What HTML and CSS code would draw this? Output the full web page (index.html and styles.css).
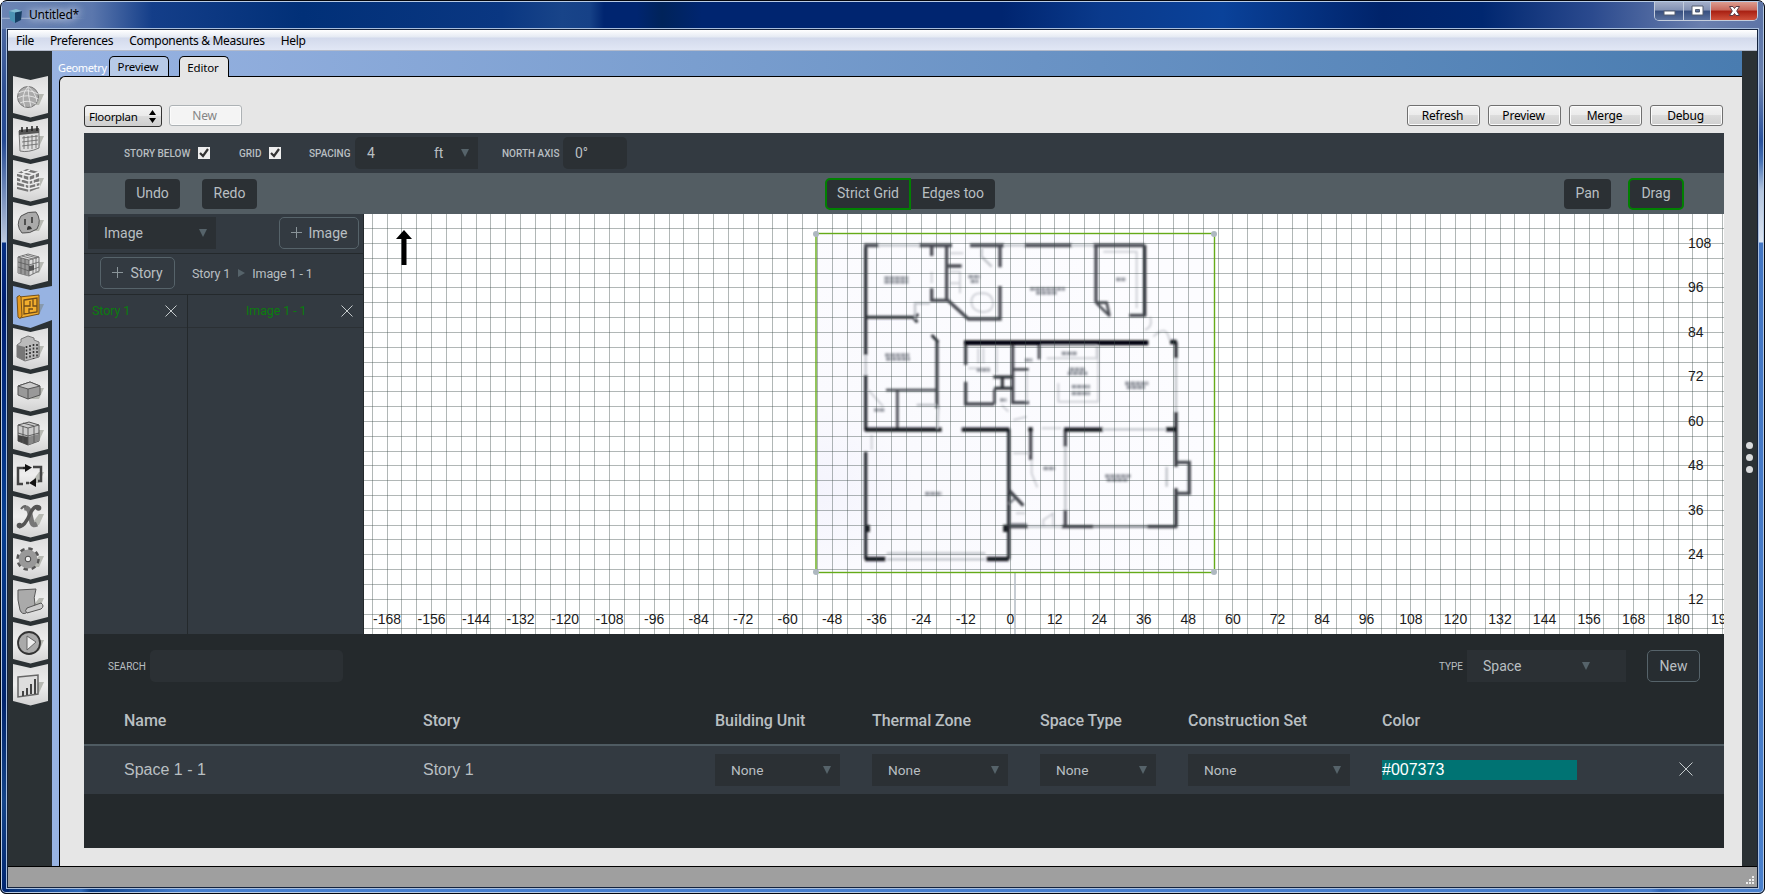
FILE: index.html
```html
<!DOCTYPE html>
<html lang="en">
<head>
<meta charset="utf-8">
<title>Untitled*</title>
<link rel="stylesheet" href="styles.css">
</head>
<body>
<div class="window">
  <header class="titlebar">
    <svg class="app-icon" width="14" height="14" viewBox="0 0 14 14"><path d="M0 2L6 3V14L1 11Z" fill="#4c93b4"/><path d="M6 3L13 2L12 11L6 14Z" fill="#173f63"/><path d="M0 2L7 0L13 2L6 3.500Z" fill="#83bdd2"/></svg>
    <span class="title">Untitled*</span>
    <div class="controls">
      <span class="ctl"><svg width="28" height="18"><rect x="9" y="9" width="11" height="4" fill="#fff" stroke="#555e70"/></svg></span>
      <span class="ctl"><svg width="26" height="18"><path d="M8 4H19V13H8ZM11.500 7.500V10H15.500V7.500Z" fill="#fff" fill-rule="evenodd" stroke="#555e70"/></svg></span>
      <span class="ctl close"><svg width="46" height="18"><path d="M18.500 4.500H22L23.500 6.500L25 4.500H28.500L25.700 9L28.500 13.500H25L23.500 11.500L22 13.500H18.500L21.300 9Z" fill="#fff" stroke="#5b3b45"/></svg></span>
    </div>
  </header>
  <div class="client">
    <nav class="menu"><span>File</span><span>Preferences</span><span>Components &amp; Measures</span><span>Help</span></nav>
    <div class="main">
      <aside class="rail" id="rail"></aside>
      <div class="stage">
        <div class="tabs"><span class="section">Geometry</span><span class="tab">Preview</span><span class="tab active">Editor</span></div>
        <div class="page">
          <div class="actions">
            <span class="combo">Floorplan<svg width="7" height="13"><path d="M0 5L3.500 0L7 5ZM0 8L3.500 13L7 8Z"/></svg></span>
            <span class="btn disabled">New</span>
            <span class="spring"></span>
            <span class="btn">Refresh</span><span class="btn">Preview</span><span class="btn">Merge</span><span class="btn">Debug</span>
          </div>
          <div class="editor">
            <div class="settings">
              <label class="story-below">STORY BELOW <i class="check"><svg width="12" height="12"><path d="M2 6L5 9L10 2" fill="none" stroke="#333" stroke-width="2.200"/></svg></i></label>
              <label class="grid-opt">GRID <i class="check"><svg width="12" height="12"><path d="M2 6L5 9L10 2" fill="none" stroke="#333" stroke-width="2.200"/></svg></i></label>
              <label class="spacing">SPACING</label><span class="field num">4</span><span class="field unit">ft<b class="caret"></b></span>
              <label class="north">NORTH AXIS</label><span class="field axis">0°</span>
            </div>
            <div class="tools">
              <span class="tool undo">Undo</span><span class="tool redo">Redo</span>
              <span class="tool strict on">Strict Grid</span><span class="tool edges">Edges too</span>
              <span class="tool pan">Pan</span><span class="tool drag on">Drag</span>
            </div>
            <div class="work">
              <div class="side">
                <div class="side-top"><span class="field kind">Image<b class="caret"></b></span><span class="outline add-image"><svg width="11" height="11"><path d="M5.500 0V11M0 5.500H11"/></svg>Image</span></div>
                <div class="crumbs"><span class="outline add-story"><svg width="11" height="11"><path d="M5.500 0V11M0 5.500H11"/></svg>Story</span><span>Story 1</span><b class="arrow"></b><span>Image 1 - 1</span></div>
                <div class="lists">
                  <div class="list stories"><div class="item"><span>Story 1</span><svg class="x" width="12" height="12"><path d="M.5.500L11.500 11.500M11.500.500L.5 11.500"/></svg></div></div>
                  <div class="list images"><div class="item"><span>Image 1 - 1</span><svg class="x" width="12" height="12"><path d="M.5.500L11.500 11.500M11.500.500L.5 11.500"/></svg></div></div>
                </div>
              </div>
              <svg class="canvas" width="1360" height="420" viewBox="364 214 1360 420">
                <defs>
                  <filter id="soft" x="-5%" y="-5%" width="110%" height="110%"><feGaussianBlur stdDeviation="2.600"/></filter>
                  <filter id="haze" x="-5%" y="-5%" width="110%" height="110%"><feGaussianBlur stdDeviation="3.200"/></filter>
                  <radialGradient id="tint" cx="0" cy=".75" r="1"><stop offset="0" stop-color="#f4f4fd"/><stop offset=".25" stop-color="#fafafe"/><stop offset="1" stop-color="#fcfcff"/></radialGradient>
                </defs>
                <rect x="816" y="234" width="398" height="338" fill="url(#tint)"/>
                <g transform="translate(800 220) scale(.33333)">
                  <g filter="url(#soft)" fill="none" stroke="#2b2d34">
                    <path stroke-width="10" d="M197 75V405M197 465V632M197 695V1018M626 628V1018M1034 75V290M1128 365V415M1128 575V740M1128 805V920"/>
                    <path stroke-width="11" stroke="#4b4e56" d="M192 76H236M358 76H456M510 76H612M674 76H815M880 76H1034"/>
                    <path stroke-width="10" stroke="#484b53" d="M440 76V238L505 297H600V198M600 76V142M888 76V248M395 76V108M395 205V241H440M440 138H485M988 286H1034M411 365V565M497 368V435M497 485V552H583M638 370V548H687M796 628V680M796 870V920M692 628V720M1128 727H1168V820H1128"/>
                    <path stroke-width="8" stroke="#484b53" d="M258 510H410M292 510V628M583 508V552M640 448H686M717 375V418M888 248L930 289M888 248H920L928 285"/>
                    <path stroke-width="9" d="M197 292H345M340 293L355 283M340 292L352 307M395 345L415 367M580 471H638M583 505H638M607 471V505"/>
                    <path stroke-width="15" stroke="#050608" d="M492 368H1045"/>
                    <path stroke-width="13" stroke="#181a20" d="M195 629H425M485 629H628M792 629H908M1098 628H1130M1110 366H1130M685 628H698M195 1017H256M560 1017H626M203 915V936M616 914V936"/>
                    <path stroke-width="10" stroke="#3c3f47" d="M626 920H684M785 920H880M1042 920H1132M626 810L670 857"/>
                    <path stroke-width="7" stroke="#777b83" d="M880 920H1042M626 852L645 835M630 913L680 913"/>
                  </g>
                  <g filter="url(#haze)" fill="none" stroke="#c0c3c9" stroke-width="7">
                    <path d="M236 76H358M612 76H674M815 76H880M197 405V465M260 1000H556M260 1018H556M1128 415V575M796 680V870M908 628H1098M684 920H785M1100 740V800M350 555H410M415 555L412 628M345 300V250H390M545 85V110L575 140"/>
                    <path d="M910 95H1010V265M450 100H490M450 155H480V220M450 190H480M395 155V190M540 220Q575 215 580 250Q575 280 542 275Q510 270 515 238Q520 220 540 220M680 455V550M895 375V545H775V490M720 375H890V415H740M535 385V430M550 385V430M590 380V460M505 445H570M640 700H690M695 720V760L712 802M725 625H785M640 600L680 590M1035 330Q1060 320 1050 290M1060 350Q1100 310 1108 360M760 920V880L730 900V920M205 510L250 560M215 645V690M605 555L625 575M648 880H675" stroke-width="6" opacity=".75"/>
                    <path stroke="#9a9da5" stroke-width="11" stroke-dasharray="14 2" d="M253 174H325M253 186H325M255 405H328M258 417H330M690 207H795M708 219H770M505 170H540M512 184H535M948 178H976M808 448H855M803 460H862M975 490H1045M980 502H1035M815 500H870M815 520H870M785 400H830M375 821H425M730 745H765M915 768H992M920 780H985M222 570H255M530 450H570M600 540H620M675 420H697"/>
                  </g>
                </g>
                <g id="grid" stroke="#3b4a49" stroke-opacity=".4" shape-rendering="crispEdges"></g>
                <path d="M1015 573V634" stroke="#b4bdc4" stroke-width="1.500"/>
                <rect x="816" y="233.500" width="398.500" height="339" fill="none" stroke="#65ab18" stroke-width="1.400"/>
                <g fill="#aeb8c0"><circle cx="816" cy="234" r="3"/><circle cx="1214" cy="234" r="3"/><circle cx="816" cy="572" r="3"/><circle cx="1214" cy="572" r="3"/></g>
                <path d="M404 230L412 239H406.500V265H401.500V239H396Z"/>
                <g id="labels" font-family="'Liberation Sans',Arial,sans-serif" font-size="14" fill="#1c1c1c"></g>
              </svg>
            </div>
            <div class="browser">
              <div class="filter"><label>SEARCH</label><span class="field search"></span><span class="spring"></span><label>TYPE</label><span class="field type">Space<b class="caret"></b></span><span class="outline new">New</span></div>
              <div class="row head"><span>Name</span><span>Story</span><span>Building Unit</span><span>Thermal Zone</span><span>Space Type</span><span>Construction Set</span><span>Color</span><span></span></div>
              <div class="row data"><span>Space 1 - 1</span><span>Story 1</span>
                <span class="field none w125">None<b class="caret"></b></span><span class="field none w136">None<b class="caret"></b></span><span class="field none w116">None<b class="caret"></b></span><span class="field none w162">None<b class="caret"></b></span>
                <span class="color">#007373</span><span><svg class="x" width="14" height="14"><path d="M.5.500L13.500 13.500M13.500.500L.5 13.500"/></svg></span></div>
            </div>
          </div>
        </div>
      </div>
      <aside class="handle"><i></i><i></i><i></i></aside>
    </div>
    <footer class="status"><svg width="10" height="10"><path d="M7 1h2v2H7zM7 4h2v2H7zM7 7h2v2H7zM4 4h2v2H4zM4 7h2v2H4zM1 7h2v2H1z" fill="#eee"/></svg></footer>
  </div>
</div>
<script src="app.js"></script>
</body>
</html>
```
FILE: styles.css
```css
* { box-sizing: border-box; }
body { margin: 0; width: 1765px; height: 894px; overflow: hidden; background: #fff; font-family: "Noto Sans", sans-serif; }
.window { width: 1765px; height: 894px; padding: 1px 6px 5px; border: 1px solid #05070d; border-radius: 7px 7px 6px 6px; display: flex; flex-direction: column;
  background: linear-gradient(#5872a8 0, #2e4f92 90px, #254a93 140px, #b3c1d9 235px, #bccae0 241px, #073084 242px, #001f72 300px, #073f91 520px, #01246d 700px, #144489 800px, #00246f 100%) left / 8px 100% no-repeat,
  linear-gradient(#5872a8 0, #6c82ae 80px, #2a529d 140px, #4772b4 160px, #b4c6df 190px, #dbe4f1 241px, #4477c4 242px, #4a80cc 100%) right / 8px 100% no-repeat, linear-gradient(90deg, #032c70 0, #2e69b9 80px, #0a3d85 90px, #477fce 180px, #477dcb 1650px, #2e62b2 1660px, #4a80cc 1700px) bottom / 100% 8px no-repeat, #012570;
  box-shadow: inset 0 0 0 1px #b8cbe4; }
.titlebar { height: 27px; flex: none; margin: 0 -5px; padding-left: 7px; display: flex; align-items: center;
  background: radial-gradient(ellipse at 0 60%, #aabbd3 0, #91a5c8 50px, transparent 90px), linear-gradient(90deg, #6b84b3 0, #5b77ad 90px, #143e89 150px, #013078 300px, #0a3782 500px, #184489 560px, #164187 588px, #002570 602px, #002570 635px, #00235a 660px, #002570 700px, #002570 1000px, #0a3a8c 1100px, #0a429a 1220px, #00236a 1380px, #002770 1480px, #2b4a8e 1590px, #6a7fae 1700px, #5d74a6 1764px); }
.app-icon { margin-right: 6px; }
.title { font-size: 12px; letter-spacing: -.2px; padding-bottom: 2px; text-shadow: 0 0 8px #fff, 0 0 10px #dbe6f5; }
.controls { align-self: flex-start; margin-left: auto; margin-right: 5px; display: flex; border: 1px solid #c3cddd; border-top: 0; border-radius: 0 0 5px 5px; overflow: hidden; height: 19px; }
.ctl { border-right: 1px solid #c3cddd; height: 18px; background: linear-gradient(#a4afc9, #8291b3 45%, #374f7f 50%, #5a719e); }
.ctl.close { border: 0; background: linear-gradient(#dd9d90, #c8685b 45%, #a81f12 50%, #cf513b); }
.ctl svg { display: block; }
.client { flex: 1; min-height: 0; display: flex; flex-direction: column; border: 1px solid #14223c; outline: 1px solid #a7bddc; }
.menu { height: 21px; flex: none; padding: 0 8px; display: flex; gap: 16px; align-items: center; font-size: 12px; background: linear-gradient(#fff, #e5eaf3 7px, #d3daec 8px, #e1e7f5); border-bottom: 1px solid #b4bbcb; }
.menu span { white-space: nowrap; letter-spacing: -.32px; }
.main { flex: 1; min-height: 0; display: flex; }
.rail { width: 44px; flex: none; background: #2b3134; padding: 25px 0 0 5px; }
.rail svg { display: block; height: 42px; overflow: visible; }
.stage { flex: 1; min-width: 0; background: linear-gradient(90deg, #98b3e2, #497cb0); display: flex; flex-direction: column; }
.tabs { height: 25px; flex: none; display: flex; align-items: flex-end; padding-left: 6px; font-size: 11.500px; }
.section { color: #fff; width: 51px; padding-bottom: 1px; font-size: 11px; letter-spacing: -.35px; }
.tab { height: 20px; width: 60px; border: 1px solid #000; border-bottom: 0; border-radius: 5px 5px 0 0; background: #b7cae7; text-align: center; line-height: 20px; padding-right: 2px; letter-spacing: -.15px; }
.tab.active { width: 50px; height: 21px; margin: 0 0 -1px 10px; background: #e6e6e6; line-height: 22px; position: relative; }
.page { flex: 1; margin-left: 7px; border: 1px solid #000; border-right: 0; border-radius: 6px 0 0 0; border-bottom: 0; background: #e6e6e6; padding: 28px 18px 0 24px; }
.actions { display: flex; align-items: flex-start; height: 28px; gap: 8px; }
.spring { flex: 1; }
.btn, .combo { height: 21px; width: 73px; font-size: 12px; letter-spacing: -.2px; line-height: 20px; text-align: center; border: 1px solid #707070; border-radius: 3px; background: linear-gradient(#f3f3f3, #ebebeb 48%, #dcdcdc 50%, #cfcfcf); box-shadow: inset 0 0 0 1px #fbfbfb; padding-right: 2px; }
.btn:last-child { margin-right: 1px; }
.combo { width: 78px; height: 22px; padding: 1px 5px 0 4px; border-color: #333; display: flex; justify-content: space-between; align-items: center; margin-right: -1px; box-shadow: none; font-size: 11.500px; letter-spacing: -.3px; }
.disabled { color: #848484; background: #f4f4f4; border-color: #adb2b5; }
.editor { height: 715px; background: #24292c; color: #b9bfc2; font-family: Roboto, sans-serif; font-size: 14px; display: flex; flex-direction: column; }
.settings { height: 40px; flex: none; background: #333a41; display: flex; align-items: center; padding-left: 40px; }
.settings label, .filter label { font-size: 10px; display: flex; align-items: center; white-space: nowrap; }
.settings label { font-weight: 500; }
.check { width: 12px; height: 12px; background: #eee; display: block; }
.story-below { width: 115px; gap: 8px; }
.grid-opt { width: 70px; gap: 8px; }
.spacing { width: 46px; }
.field { height: 32px; background: #2b3034; display: flex; align-items: center; }
.caret { border: 4.500px solid transparent; border-top: 8px solid #56636a; border-bottom: 0; }
.num { width: 64px; border-radius: 5px 0 0 5px; padding-left: 12px; }
.unit { width: 59px; padding: 0 9px 0 15px; justify-content: space-between; }
.north { margin-left: 24px; width: 61px; }
.axis { width: 64px; border-radius: 5px; padding-left: 12px; }
.tools { height: 41px; flex: none; background: #535d63; display: flex; align-items: center; padding-left: 41px; }
.tool { height: 30px; background: #2b3034; border-radius: 4px; line-height: 29px; text-align: center; white-space: nowrap; }
.undo, .redo { width: 55px; }
.redo { margin-left: 22px; }
.on { outline: 2px solid #018001; outline-offset: -1px; }
.strict { width: 84px; margin-left: 569px; border-radius: 4px 0 0 4px; }
.edges { width: 84px; margin-left: 1px; border-radius: 0 4px 4px 0; }
.pan { width: 47px; margin-left: 569px; }
.drag { width: 54px; margin-left: 18px; }
.work { height: 420px; flex: none; display: flex; }
.side { width: 280px; background: #333a41; border-right: 1px solid #24292c; display: flex; flex-direction: column; }
.side-top, .crumbs { display: flex; align-items: center; border-bottom: 1px solid #24292c; }
.side-top { height: 40px; justify-content: space-between; padding: 0 4px 1px; }
.crumbs { height: 41px; padding: 0 0 2px 16px; font-size: 12.500px; letter-spacing: -.1px; }
.kind { width: 128px; padding: 0 9px 0 16px; justify-content: space-between; }
.outline { height: 32px; border: 1px solid #56636a; border-radius: 5px; display: flex; align-items: center; justify-content: center; gap: 7px; font-size: 14px; letter-spacing: 0; padding-bottom: 1px; }
.outline svg { stroke: #8a9499; }
.add-image { width: 80px; }
.add-story { width: 75px; margin-right: 17px; }
.arrow { margin: 0 7px 0 8px; border: 4px solid transparent; border-left: 7px solid #56636a; border-right: 0; }
.lists { flex: 1; display: flex; font-size: 12.500px; letter-spacing: -.1px; color: #0b7d0e; }
.stories { width: 104px; border-right: 1px solid #24292c; }
.images { flex: 1; }
.item { height: 33px; border-bottom: 1px solid #2b3034; display: flex; align-items: center; justify-content: space-between; padding: 0 10px 1px 8px; }
.images .item { padding-left: 58px; }
.x { fill: none; stroke: #c4cacc; display: block; }
.canvas { background: #fff; display: block; }
.browser { flex: 1; display: flex; flex-direction: column; }
.filter { height: 64px; display: flex; align-items: center; padding: 0 24px; }
.search { width: 193px; margin-left: 4px; border-radius: 5px; }
.type { width: 159px; margin: 0 21px 0 4px; padding: 0 36px 0 16px; justify-content: space-between; }
.new { width: 53px; background: #272d31; }
.row { display: grid; grid-template-columns: 299px 292px 157px 168px 148px 194px 297px 1fr; padding-left: 40px; align-items: center; }
.head { height: 48px; padding-bottom: 2px; border-bottom: 2px solid #4f5b62; font-size: 16px; font-weight: 500; letter-spacing: -.05px; }
.data { height: 48px; background: #333a41; font-family: "Liberation Sans", Arial, sans-serif; font-size: 16px; }
.none { font-family: Roboto, sans-serif; font-size: 13.700px; padding: 0 9px 0 16px; justify-content: space-between; }
.w125 { width: 125px; } .w136 { width: 136px; } .w116 { width: 116px; } .w162 { width: 162px; }
.color { width: 195px; height: 20px; line-height: 19px; background: #007373; color: #fff; }
.data .x { margin-bottom: 3px; }
.handle { width: 15px; background: #2b3134; display: flex; flex-direction: column; align-items: center; justify-content: center; gap: 5px; padding: 0 1px 2px 0; }
.handle i { width: 7px; height: 7px; border-radius: 50%; background: #d9dbdc; }
.status { height: 21px; flex: none; border-top: 1px solid #000; background: #9f9f9f; display: flex; justify-content: flex-end; align-items: flex-end; padding: 2px; }
```
FILE: app.js
```js
const icons = [
  '<circle cx="15" cy="21" r="10.500" fill="#aaa" stroke="#777"/><path d="M5 17Q15 12 25 18M4.500 22Q14 17 25.500 23M7 27Q15 23 23 28M15 10.500Q7 20 12 31M15 10.500Q15 20 18 31M15 10.500Q23 17 24 26" fill="none" stroke="#eee" stroke-width=".8"/>',
  '<path d="M6 13L26 11V30Q15 35 7 33Z" fill="#ddd" stroke="#777"/><path d="M6 12L26 10V15L6 17Z" fill="#555"/><path d="M9 9V14M14 9V14M19 8V13M24 8V13" stroke="#222" stroke-width="1.500"/><path d="M9 20L25 18M9 24L25 22M9 28L25 26M11 18V31M15 18V31M19 17V31M23 17V30" stroke="#666" stroke-width=".8"/>',
  '<path d="M4 13L14 9L26 12V28L16 32L4 29Z" fill="#777"/><path d="M4 13L16 16L26 12M4 17L16 21L27 17M4 21.500L16 25L27 22M4 26L16 29L27 26M16 16V32M10 15V19M8 18V23M12 24V28M22 14V19M20 19V23M23 22V27M9 11L21 14M17 10L9 14" fill="none" stroke="#eee" stroke-width="1.500"/>',
  '<path d="M8 14Q15 9 23 10Q29 18 24 27Q17 32 9 31Q2 23 8 14Z" fill="#aaa" stroke="#555"/><path d="M12 17V23M19 15V21" stroke="#333" stroke-width="1.500"/><path d="M14 28Q14 24 16 24T19 27Z" fill="#333"/>',
  '<path d="M5 13L15 10L26 13V27L16 32L5 29Z" fill="#ddd" stroke="#777"/><path d="M5 13L16 16V32L5 29Z" fill="#999"/><path d="M16 22L21 21V26L16 27Z" fill="#555"/><path d="M5 13L16 16L26 13M5 18L16 21L26 18M5 23L16 27L26 23M9 12L20 15V30M13 11L24 14M16 16V32M8 14V30M12 15V31M23 14V28" fill="none" stroke="#555" stroke-width=".7"/>',
  '<path d="M6 11L26 9V28L7 32Z" fill="#f3ae2d" stroke="#75501b"/><path d="M4 11Q7 8 8 11L9 30Q7 34 5 31Z" fill="#e79a1d" stroke="#75501b"/><path d="M11 14L24 12V26L11 28ZM11 20H17V15M20 13V20H24M16 27V23H20" fill="none" stroke="#6f4c1a" stroke-width="1.300"/>',
  '<path d="M4 17L8 14V11L15 8L21 10V12L26 14V29L12 33L4 29Z" fill="#bbb" stroke="#777"/><path d="M4 17L12 19V33L4 29Z" fill="#777"/><path d="M13.500 18V32M17 17V31M20.500 16V31M24 16V30" stroke="#333" stroke-width="1.600" stroke-dasharray="2 1.500"/>',
  '<path d="M5 16L17 12L27 16V25L15 29L5 25Z" fill="#999" stroke="#555"/><path d="M5 16L17 12L27 16L15 19Z" fill="#ccc" stroke="#555"/><path d="M15 19V29" stroke="#555"/>',
  '<path d="M5 13L16 10L26 13V29L15 33L5 29Z" fill="#ccc" stroke="#555"/><path d="M5 23L15 25V33L5 29Z" fill="#444"/><path d="M15 25L26 22V29L15 33Z" fill="#888"/><path d="M5 13L15 16L26 13M5 21L15 24L26 21M15 16V33M10 11L21 14V31M10 14V31" fill="none" stroke="#555" stroke-width=".9"/>',
  '<path d="M10 14H5V30H10M20 13H28V27H25M13 29H16" fill="none" stroke="#444" stroke-width="2.500"/><path d="M10 14H13" stroke="#222" stroke-width="2.500"/><path d="M12 10L19 13.500L12 18ZM23 24V33L16 29Z" fill="#111"/>',
  '<path d="M11 12Q16 11 17 18L19 27Q20 30 24 28" fill="none" stroke="#777" stroke-width="5"/><path d="M26 11Q21 9 17 18Q12 30 6 31" fill="none" stroke="#555" stroke-width="3.500"/><circle cx="25.500" cy="12" r="2.800" fill="#555"/><circle cx="6.500" cy="29.500" r="2.800" fill="#555"/><path d="M8 13Q10 10 13 10" stroke="#666" stroke-width="2" fill="none"/>',
  '<circle cx="15" cy="21" r="9.500" fill="none" stroke="#555" stroke-width="4.500" stroke-dasharray="4 3.460"/><circle cx="15" cy="21" r="6" fill="none" stroke="#999" stroke-width="7"/><circle cx="15" cy="21" r="2.800" fill="#eee" stroke="#444"/>',
  '<path d="M5 10L23 9Q20 18 22 25L13 33Q9 35 7 30Q4 20 5 10Z" fill="#aaa" stroke="#555"/><path d="M14 28L28 23Q32 26 28 29L14 33Q11 31 14 28Z" fill="#ccc" stroke="#555"/>',
  '<circle cx="16" cy="21" r="11" fill="#aaa" stroke="#333" stroke-width="1.800"/><path d="M14 14V28L23 20Z" fill="#eee" stroke="#666"/>',
  '<path d="M5 13L25 11V30L5 33Z" fill="#ddd" stroke="#666" stroke-width="1.500"/><path d="M10 32V27M14 31V24M18 30V20M22 30V15" stroke="#444" stroke-width="2"/>'
];

document.getElementById('rail').innerHTML =
  '<svg width="0" height="0" style="position:absolute"><defs><linearGradient id="face" x2="0" y2="1"><stop stop-color="#ddd"/><stop offset=".5" stop-color="#eee"/><stop offset="1" stop-color="#d2d2d2"/></linearGradient></defs></svg>' +
  icons.map((art, i) => {
    const active = i === 5;
    const shape = active ? 'M0 0L17.500 4L39 0V34L17.500 42L0 38Z' : 'M0 0L17.500 4L35 0V37L17.500 41.500L0 37Z';
    return `<svg width="39" height="42"><path d="${shape}" fill="${active ? '#97b3e2' : 'url(#face)'}"/><path d="M18 29L26 18L31 18L26 29Z" fill="${active ? '#8799ad' : '#b7b9b3'}"/>${art}</svg>`;
  }).join('');

let lines = '';
for (let n = 0; n <= 91; n++) {
  const x = Math.floor(372.25 + n * 14.839) + 0.5;
  lines += `<path d="M${x} 214V634"/>`;
}
for (let n = 0; n <= 27; n++) {
  const y = Math.floor(228.55 + n * 14.83) + 0.5;
  lines += `<path d="M364 ${y}H1724"/>`;
}
document.getElementById('grid').innerHTML = lines;

let text = '';
for (let v = -168; v <= 192; v += 12) {
  text += `<text x="${1010.3 + v * 3.71}" y="624" text-anchor="middle">${v}</text>`;
}
for (let v = 108; v >= 12; v -= 12) {
  text += `<text x="1688" y="${248 + (108 - v) * 3.7075}">${v}</text>`;
}
document.getElementById('labels').innerHTML = text;
```
